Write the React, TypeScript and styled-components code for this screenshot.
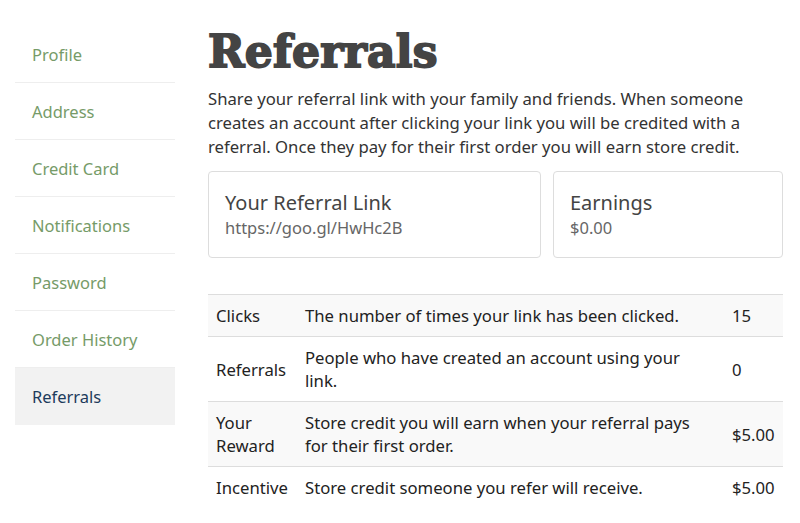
import React from 'react'
import styled, { createGlobalStyle } from 'styled-components'

const GlobalStyle = createGlobalStyle`
  html, body {
    margin: 0;
    padding: 0;
    background: #fff;
  }
  body {
    font-family: 'Noto Sans', 'DejaVu Sans', sans-serif;
    color: #333;
  }
`

const Page = styled.div`
  display: flex;
  gap: 33px;
  padding: 26px 17px 0 15px;
  width: 800px;
  box-sizing: border-box;
`
const SideNav = styled.ul`
  list-style: none;
  margin: 0;
  padding: 0;
  width: 160px;
  flex-shrink: 0;
`
const NavItem = styled.li<{ $active?: boolean }>`
  height: 57px;
  display: flex;
  align-items: center;
  padding-left: 17px;
  box-sizing: border-box;
  font-size: 16.5px;
  color: ${(p) => (p.$active ? '#1d3b5c' : '#769b68')};
  background: ${(p) => (p.$active ? '#f2f2f2' : 'transparent')};
  border-bottom: ${(p) => (p.$active ? 'none' : '1px solid #eee')};
`
const Main = styled.div`
  flex-grow: 1;
  display: flex;
  flex-direction: column;
`
const Title = styled.h1`
  margin: 0;
  font-family: 'DejaVu Serif', serif;
  font-weight: 900;
  font-size: 44px;
  line-height: 52px;
  color: #444;
  letter-spacing: 0.2px;
  -webkit-text-stroke: 1.8px #444;
`
const Intro = styled.p`
  margin: 9px 0 0;
  font-size: 16.7px;
  line-height: 24px;
  color: #333;
`
const Cards = styled.div`
  display: grid;
  grid-template-columns: 333px 1fr;
  gap: 12px;
  margin-top: 12px;
`
const Card = styled.div`
  border: 1px solid #ddd;
  border-radius: 4px;
  padding: 18px 16px 17px;
  display: flex;
  flex-direction: column;
`
const CardTitle = styled.div`
  font-size: 20px;
  line-height: 26px;
  color: #444;
`
const CardValue = styled.div`
  font-size: 16.5px;
  line-height: 24px;
  color: #666;
`
const Table = styled.table`
  margin-top: 36px;
  width: 100%;
  border-collapse: collapse;
  font-size: 16.7px;
  color: #222;
`
const Row = styled.tr<{ $striped?: boolean }>`
  background: ${(p) => (p.$striped ? '#f9f9f9' : '#fff')};
  border-top: 1px solid #ddd;
`
const Cell = styled.td<{ $width?: number }>`
  padding: 9px 8px;
  line-height: 23px;
  vertical-align: middle;
  width: ${(p) => (p.$width ? `${p.$width}px` : 'auto')};
`

const rows = [
  { label: 'Clicks', text: 'The number of times your link has been clicked.', value: '15' },
  { label: 'Referrals', text: 'People who have created an account using your link.', value: '0' },
  { label: 'Your Reward', text: 'Store credit you will earn when your referral pays for their first order.', value: '$5.00' },
  { label: 'Incentive', text: 'Store credit someone you refer will receive.', value: '$5.00' },
]

const navItems = ['Profile', 'Address', 'Credit Card', 'Notifications', 'Password', 'Order History', 'Referrals']

export default function App() {
  return (
    <>
      <GlobalStyle />
      <Page>
        <SideNav>
          {navItems.map((item) => (
            <NavItem key={item} $active={item === 'Referrals'}>
              {item}
            </NavItem>
          ))}
        </SideNav>
        <Main>
          <Title>Referrals</Title>
          <Intro>
            Share your referral link with your family and friends. When someone creates an account after
            clicking your link you will be credited with a referral. Once they pay for their first order you will
            earn store credit.
          </Intro>
          <Cards>
            <Card>
              <CardTitle>Your Referral Link</CardTitle>
              <CardValue>https://goo.gl/HwHc2B</CardValue>
            </Card>
            <Card>
              <CardTitle>Earnings</CardTitle>
              <CardValue>$0.00</CardValue>
            </Card>
          </Cards>
          <Table>
            <tbody>
              {rows.map((r, i) => (
                <Row key={r.label} $striped={i % 2 === 0}>
                  <Cell $width={73}>{r.label}</Cell>
                  <Cell>{r.text}</Cell>
                  <Cell $width={43}>{r.value}</Cell>
                </Row>
              ))}
            </tbody>
          </Table>
        </Main>
      </Page>
    </>
  )
}
